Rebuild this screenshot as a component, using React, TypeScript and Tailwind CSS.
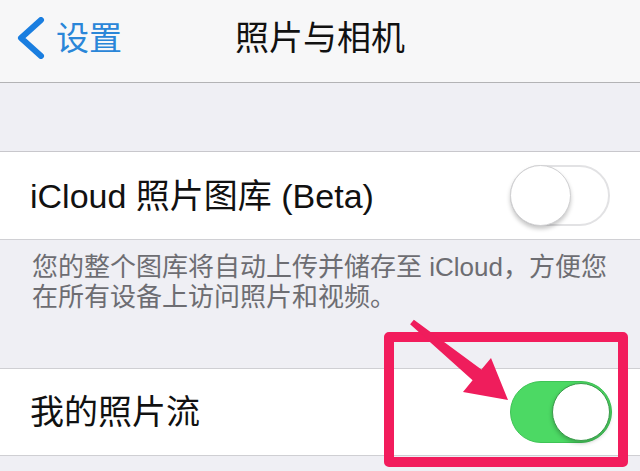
import React from "react";

const font = { fontFamily: '"Liberation Sans", "Noto Sans CJK SC", sans-serif' };

function ToggleOff() {
  return (
    <div className="relative w-[100px] h-[61px] rounded-full border-2 border-[#e2e2e4] bg-white">
      <div className="absolute left-[-2px] top-[-2px] w-[61px] h-[61px] rounded-full bg-white border border-[#d0d0d2] shadow-[0_3px_4px_rgba(0,0,0,0.22)]" />
    </div>
  );
}

function ToggleOn() {
  return (
    <div className="relative w-[102px] h-[62px] rounded-full bg-[#4cd964] border border-[#3fc456]">
      <div className="absolute right-[1px] top-[1px] w-[58px] h-[58px] rounded-full bg-white border border-[#3a9a4a] shadow-[0_2px_4px_rgba(0,0,0,0.25)]" />
    </div>
  );
}

export default function App() {
  return (
    <div className="relative w-[640px] h-[471px] overflow-hidden bg-[#efeff4]" style={font}>
      <div className="h-[83px] bg-[#f7f7f8] border-b border-[#b3b3b5] flex items-center relative">
        <div className="flex items-center pl-[17px] gap-[11px] pb-[6px]">
          <svg width="28" height="42" viewBox="0 0 28 42">
            <polyline points="24,3 4,21 24,39" fill="none" stroke="#1a7ee0" strokeWidth="6" strokeLinecap="round" strokeLinejoin="round" />
          </svg>
          <span className="text-[33px] leading-none text-[#2a86d8]">设置</span>
        </div>
        <div className="absolute inset-0 flex items-center justify-center pb-[6px]">
          <span className="text-[34px] leading-none text-[#111]">照片与相机</span>
        </div>
      </div>
      <div className="h-[69px] bg-[#efeff4] border-b border-[#c8c7cc]" />
      <div className="h-[88px] bg-white border-b border-[#d0d0d4] flex items-center justify-between pl-[30px] pr-[30px]">
        <span className="text-[34px] leading-none text-[#111]">iCloud 照片图库 (Beta)</span>
        <ToggleOff />
      </div>
      <div className="h-[128px] bg-[#efeff4] px-[32px] pt-[12px] text-[26px] leading-[30px] text-[#6d6d72] whitespace-nowrap">
        <div>您的整个图库将自动上传并储存至 iCloud，方便您</div>
        <div>在所有设备上访问照片和视频。</div>
      </div>
      <div className="h-[88px] bg-white border-y border-[#cfcfd3] flex items-center justify-between pl-[30px] pr-[28px]">
        <span className="text-[34px] leading-none text-[#111]">我的照片流</span>
        <ToggleOn />
      </div>

      <div className="absolute left-[384px] top-[332px] w-[244px] h-[135px] border-[10px] border-[#f21c5c] rounded-[5px]" />
      <svg className="absolute left-0 top-0" width="640" height="471" viewBox="0 0 640 471">
        <polygon
          points="413.9,319.7 481.4,369.4 491,358 508,400 463,392 472.6,380.2 410.1,324.3"
          fill="#ef1d5c"
        />
      </svg>
    </div>
  );
}
